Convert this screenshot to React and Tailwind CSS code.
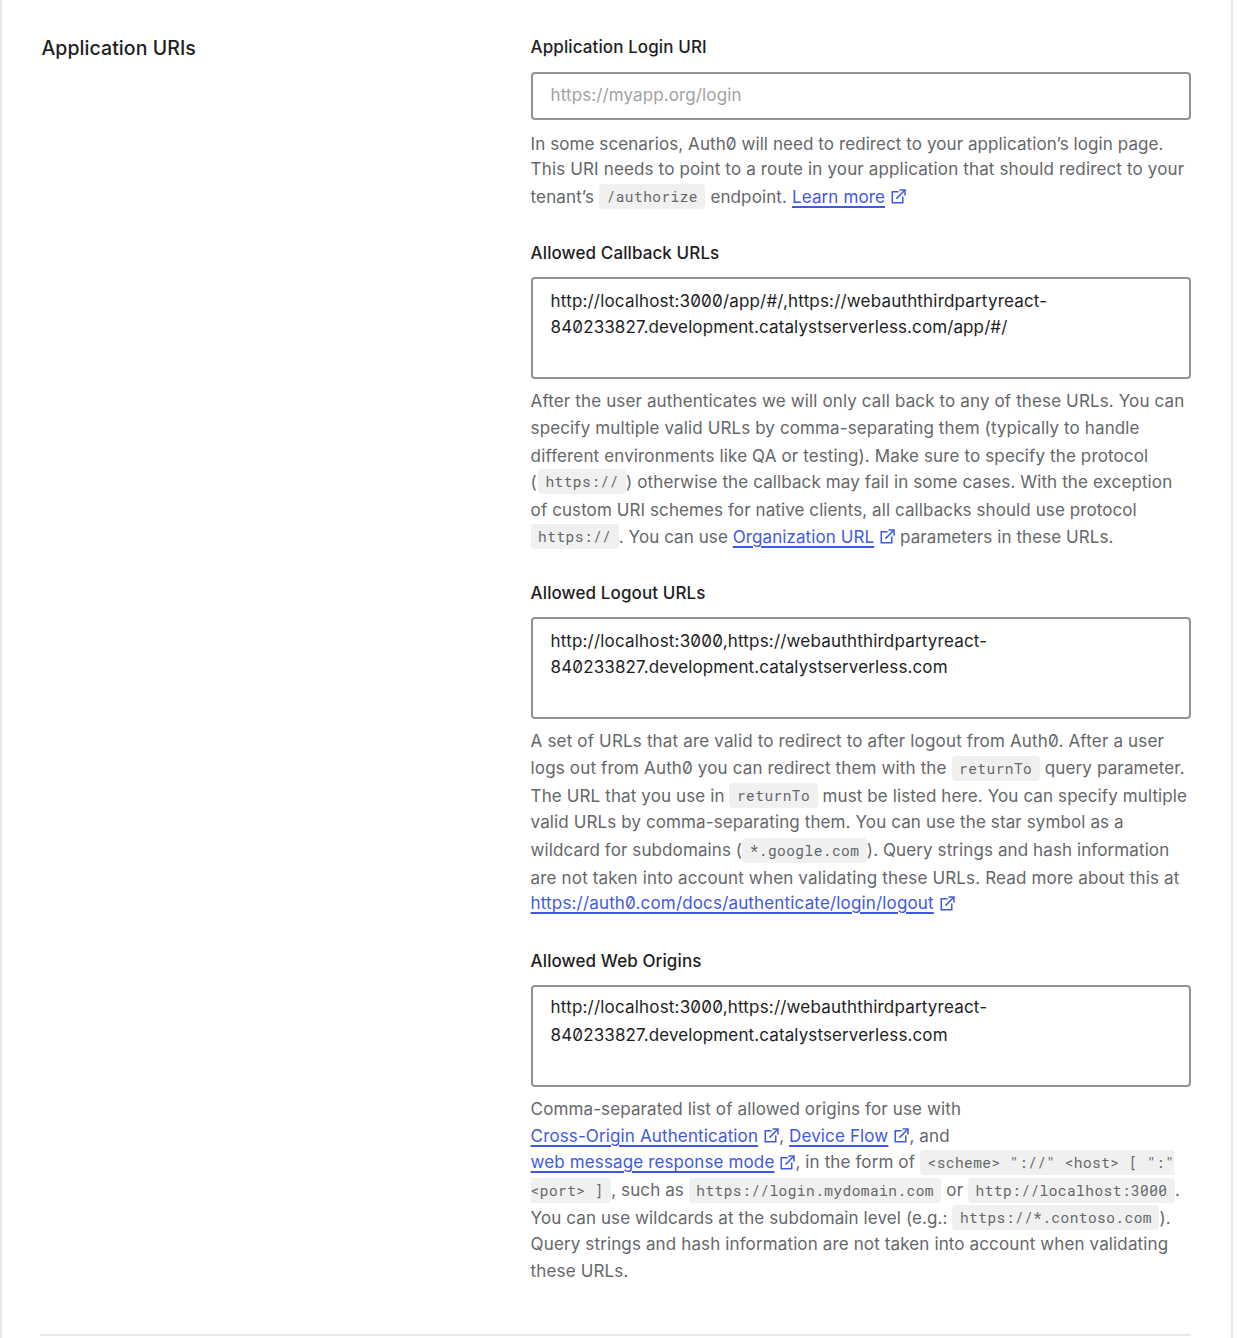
import React from "react";

function ExternalIcon({ className = "" }) {
  return (
    <svg
      viewBox="0 0 15 15"
      className={`relative inline-block h-[15px] w-[15px] align-baseline ${className}`}
      fill="none"
      stroke="currentColor"
      strokeWidth="1.5"
    >
      <path d="M7.6 2.75H1.25V13.75H11.75V7.6" />
      <path d="M8.5 1H14V6.5" />
      <path d="M13.8 1.2L5.4 9.6" />
    </svg>
  );
}

function Link({ children, iconClass = "top-[1px]" }) {
  return (
    <>
      <a
        href="#"
        className="text-[#3f59e4] underline decoration-[1.5px] underline-offset-[3px]"
      >
        {children}
      </a>
      <ExternalIcon className={`ml-[6px] text-[#3f59e4] ${iconClass}`} />
    </>
  );
}

function Code({ children, shape = "rounded px-[7.5px]", shift = "top-0" }) {
  return (
    <code
      className={`relative whitespace-pre bg-[#f0f0f0] pb-[3px] pt-[3px] font-['Roboto_Mono','DejaVu_Sans_Mono',monospace] text-[14.5px] leading-none tracking-[0.44px] ${shape} ${shift}`}
    >
      {children}
    </code>
  );
}

function Line({ className = "h-[27px] tracking-[0.15px]", children }) {
  return <span className={`block whitespace-nowrap leading-[26px] ${className}`}>{children}</span>;
}

function Field({ label, className = "", children }) {
  return (
    <section className={className}>
      <h3 className="h-6 text-[17px] font-medium leading-6 tracking-[0.1px] text-[#1e1e1e]">{label}</h3>
      {children}
    </section>
  );
}

function TextArea({ children, className = "pt-[9px]" }) {
  return (
    <div
      className={`mt-3 h-[102px] w-[660px] rounded border-2 border-[#929292] pl-[18px] text-[17px] text-[#1e1e1e] ${className}`}
    >
      {children}
    </div>
  );
}

function Help({ children, className = "mt-[9px]" }) {
  return <p className={`text-[17px] text-[#65676a] ${className}`}>{children}</p>;
}

export default function App() {
  return (
    <div className="h-[1338px] w-[1238px] overflow-hidden bg-white font-['Inter',sans-serif] [font-feature-settings:'zero']">
      <main className="flex h-full w-[1233px] flex-col border-l-2 border-r-2 border-[#e7e7e7] pl-[38px]">
        <div className="flex h-[1334px] shrink-0 pt-[35px]">
          <h2 className="w-[490.6px] shrink-0 pl-[1.4px] text-[19.5px] font-medium leading-[26px] tracking-[0.07px] text-[#1e1e1e]">
            Application URIs
          </h2>
          <div className="w-[660px] shrink-0">
            <Field label="Application Login URI" className="h-[206px]">
              <input
                className="mt-[13px] block h-12 w-[660px] rounded border-2 border-[#929292] px-[18px] pb-[2px] text-[17px] tracking-[0.11px] outline-none placeholder:text-[#a2a2a2] placeholder:opacity-100"
                placeholder="https://myapp.org/login"
              />
              <Help className="mt-[11px]">
                <Line className="h-[25px] tracking-[0.08px]">
                  In some scenarios, Auth0 will need to redirect to your application’s login page.
                </Line>
                <Line className="h-[28px] tracking-[0.143px]">
                  This URI needs to point to a route in your application that should redirect to your
                </Line>
                <Line className="h-[27px] tracking-[0.12px]">
                  tenant’s <Code shift="top-[-1px]">/authorize</Code> endpoint. <Link>Learn more</Link>
                </Line>
              </Help>
            </Field>

            <Field label="Allowed Callback URLs" className="h-[340px]">
              <TextArea>
                <Line className="h-[26px] tracking-[0.18px]">
                  http://localhost:3000/app/#/,https://webauththirdpartyreact-
                </Line>
                <Line className="h-[27px] tracking-[0.11px]">840233827.development.catalystserverless.com/app/#/</Line>
              </TextArea>
              <Help>
                <Line className="h-[27px] tracking-[0.13px]">
                  After the user authenticates we will only call back to any of these URLs. You can
                </Line>
                <Line className="h-[28px] tracking-[0.115px]">
                  specify multiple valid URLs by comma-separating them (typically to handle
                </Line>
                <Line className="h-[26px] tracking-[0.13px]">
                  different environments like QA or testing). Make sure to specify the protocol
                </Line>
                <Line className="h-[28px] tracking-[0.115px]">
                  (<Code shift="top-[-1px] ml-px">https://</Code>) otherwise the callback may fail in some cases. With the exception
                </Line>
                <Line className="h-[27px] tracking-[0.09px]">
                  of custom URI schemes for native clients, all callbacks should use protocol
                </Line>
                <Line className="h-[27px] tracking-[0.08px]">
                  <Code shift="top-[-1px]">https://</Code>. You can use <Link>Organization URL</Link>{" "}
                  parameters in these URLs.
                </Line>
              </Help>
            </Field>

            <Field label="Allowed Logout URLs" className="h-[368px]">
              <TextArea>
                <Line className="h-[26px] tracking-[0.19px]">http://localhost:3000,https://webauththirdpartyreact-</Line>
                <Line className="h-[27px] tracking-[0.12px]">840233827.development.catalystserverless.com</Line>
              </TextArea>
              <Help>
                <Line className="h-[27px] tracking-[0.167px]">
                  A set of URLs that are valid to redirect to after logout from Auth0. After a user
                </Line>
                <Line className="h-[28px] tracking-[0.15px]">
                  logs out from Auth0 you can redirect them with the <Code>returnTo</Code> query parameter.
                </Line>
                <Line className="h-[26px] tracking-[0.115px]">
                  The URL that you use in <Code shift="top-[-1px]">returnTo</Code> must be listed here. You can specify multiple
                </Line>
                <Line className="h-[28px] tracking-[0.11px]">
                  valid URLs by comma-separating them. You can use the star symbol as a
                </Line>
                <Line className="h-[28px] tracking-[0.1px]">
                  wildcard for subdomains (<Code>*.google.com</Code>). Query strings and hash information
                </Line>
                <Line className="h-[25px] tracking-[0.16px]">
                  are not taken into account when validating these URLs. Read more about this at
                </Line>
                <Line className="h-[27px] tracking-[0.165px]">
                  <Link iconClass="top-[2px]">https://auth0.com/docs/authenticate/login/logout</Link>
                </Line>
              </Help>
            </Field>

            <Field label="Allowed Web Origins">
              <TextArea className="pt-[7px]">
                <Line className="h-[28px] tracking-[0.19px]">http://localhost:3000,https://webauththirdpartyreact-</Line>
                <Line className="h-[27px] tracking-[0.12px]">840233827.development.catalystserverless.com</Line>
              </TextArea>
              <Help>
                <Line className="h-[27px] tracking-[0.12px]">Comma-separated list of allowed origins for use with</Line>
                <Line className="h-[26px] tracking-[0.13px]">
                  <Link>Cross-Origin Authentication</Link>, <Link>Device Flow</Link>, and
                </Line>
                <Line className="h-[28px] tracking-[0.12px]">
                  <Link iconClass="top-[2px]">web message response mode</Link>, in the form of{" "}
                  <Code shape="rounded-l pl-[7.5px]">{'<scheme> "://" <host> [ ":"'}</Code>
                </Line>
                <Line className="h-[28px] tracking-[0.1px]">
                  <Code shape="rounded-r pr-[7.5px]">{"<port> ]"}</Code>, such as{" "}
                  <Code>https://login.mydomain.com</Code> or <Code>http://localhost:3000</Code>.
                </Line>
                <Line className="h-[26px] tracking-[0.1px]">
                  You can use wildcards at the subdomain level (e.g.:{" "}
                  <Code shift="top-[-1px]">https://*.contoso.com</Code>).
                </Line>
                <Line className="h-[27px] tracking-[0.13px]">
                  Query strings and hash information are not taken into account when validating
                </Line>
                <Line>these URLs.</Line>
              </Help>
            </Field>
          </div>
        </div>
        <hr className="w-[1151px] shrink-0 border-t-2 border-[#e7e7e7]" />
      </main>
    </div>
  );
}
